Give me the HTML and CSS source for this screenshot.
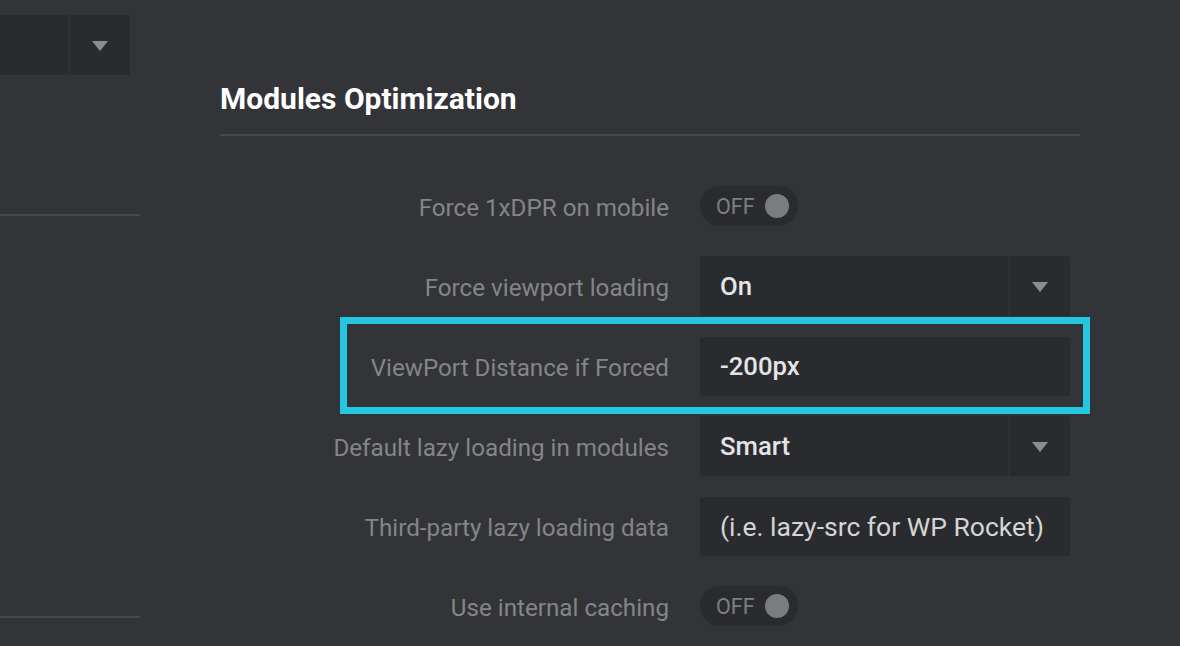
FILE: index.html
```html
<!DOCTYPE html>
<html lang="en">
<head>
<meta charset="utf-8">
<title>Modules Optimization</title>
<link rel="stylesheet" href="styles.css">
</head>
<body>
<div class="page">
  <aside class="side">
    <div class="select side-select">
      <div class="select-value"></div>
      <div class="select-arrow"><span class="tri"></span></div>
    </div>
    <div class="side-line first"></div>
    <div class="side-line second"></div>
  </aside>
  <main class="main">
    <h2 class="title">Modules Optimization</h2>
    <div class="rows">
      <div class="row">
        <label class="label">Force 1xDPR on mobile</label>
        <div class="control"><div class="toggle"><span class="toggle-text">OFF</span><span class="knob"></span></div></div>
      </div>
      <div class="row">
        <label class="label">Force viewport loading</label>
        <div class="control">
          <div class="select">
            <div class="select-value">On</div>
            <div class="select-arrow"><span class="tri"></span></div>
          </div>
        </div>
      </div>
      <div class="row highlighted">
        <label class="label">ViewPort Distance if Forced</label>
        <div class="control"><div class="input">-200px</div></div>
        <div class="highlight"></div>
      </div>
      <div class="row">
        <label class="label">Default lazy loading in modules</label>
        <div class="control">
          <div class="select">
            <div class="select-value">Smart</div>
            <div class="select-arrow"><span class="tri"></span></div>
          </div>
        </div>
      </div>
      <div class="row">
        <label class="label">Third-party lazy loading data</label>
        <div class="control"><div class="input placeholder">(i.e. lazy-src for WP Rocket)</div></div>
      </div>
      <div class="row">
        <label class="label">Use internal caching</label>
        <div class="control"><div class="toggle"><span class="toggle-text">OFF</span><span class="knob"></span></div></div>
      </div>
    </div>
  </main>
</div>
</body>
</html>
```

FILE: styles.css
```css
html, body {
  margin: 0;
  padding: 0;
  background: #333438;
  font-family: Roboto, "Liberation Sans", sans-serif;
  overflow: hidden;
}

.page {
  display: flex;
  width: 1180px;
  height: 646px;
  gap: 80px;
}

.side {
  width: 140px;
  flex: none;
  display: flex;
  flex-direction: column;
  padding-top: 15px;
}

.side-line {
  height: 2px;
  background: #45484c;
}

.side-line.first {
  margin-top: 139px;
}

.side-line.second {
  margin-top: 400px;
}

.main {
  width: 860px;
  flex: none;
  padding-top: 81px;
}

.title {
  margin: 0;
  font-size: 30px;
  line-height: 36px;
  font-weight: 700;
  color: #ffffff;
  padding-bottom: 17px;
  border-bottom: 2px solid #45484c;
}

.rows {
  margin-top: 40px;
  display: flex;
  flex-direction: column;
  gap: 20px;
}

.row {
  position: relative;
  display: grid;
  grid-template-columns: 449px 370px;
  column-gap: 31px;
  align-items: center;
  height: 60px;
}

.label {
  text-align: right;
  font-size: 24.2px;
  color: #848589;
  padding-top: 3px;
  white-space: nowrap;
}

.control {
  display: flex;
  align-items: center;
}

.toggle {
  width: 98px;
  height: 40px;
  border-radius: 20px;
  background: #2a2b2f;
  display: flex;
  align-items: center;
  box-sizing: border-box;
  padding-left: 16px;
  gap: 10px;
}

.toggle-text {
  font-size: 21.5px;
  color: #7e7f83;
  line-height: 1;
  padding-top: 1px;
}

.knob {
  width: 24px;
  height: 24px;
  border-radius: 50%;
  background: #7b7c7f;
}

.select {
  display: grid;
  grid-template-columns: 308px 60px;
  column-gap: 2px;
  width: 370px;
  height: 60px;
  background: #2f3034;
  border-radius: 3px;
  overflow: hidden;
}

.select.side-select {
  width: 130px;
  grid-template-columns: 68px 60px;
  border-radius: 0 3px 3px 0;
}

.select-value {
  background: #2a2b2f;
  display: flex;
  align-items: center;
  padding-left: 20px;
  font-size: 25.7px;
  font-weight: 500;
  color: #e4e4e6;
}

.select-arrow {
  background: #2a2b2f;
  display: flex;
  align-items: center;
  justify-content: center;
}

.tri {
  width: 0;
  height: 0;
  border-left: 8px solid transparent;
  border-right: 8px solid transparent;
  border-top: 10px solid #8c8d90;
  margin-top: 2px;
}

.input {
  width: 370px;
  height: 59px;
  box-sizing: border-box;
  background: #2a2b2f;
  border-radius: 4px;
  display: flex;
  align-items: center;
  padding-left: 20px;
  font-size: 25.7px;
  font-weight: 500;
  color: #e4e4e6;
}

.input.placeholder {
  font-size: 26.5px;
  font-weight: 400;
  color: #d4d5d7;
}

.highlight {
  position: absolute;
  left: 120px;
  right: -10px;
  top: -19px;
  bottom: -18px;
  border: 7px solid #25c6e2;
  pointer-events: none;
}
```
